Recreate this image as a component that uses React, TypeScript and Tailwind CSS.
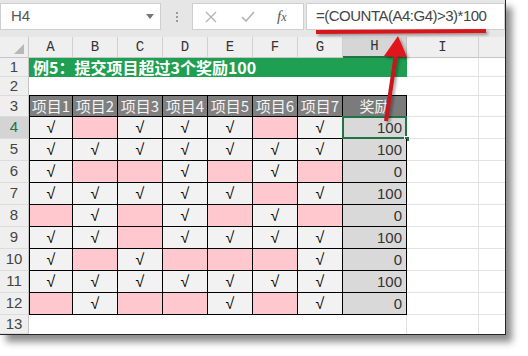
import React from "react";

const colW = ["w-[44px]", "w-[45px]", "w-[45px]", "w-[45px]", "w-[45px]", "w-[45px]", "w-[45px]"];
const letters = ["A", "B", "C", "D", "E", "F", "G"];

const data: [number, string, number][] = [
  [4, "1011101", 100],
  [5, "1111111", 100],
  [6, "1001010", 0],
  [7, "1111101", 100],
  [8, "0101010", 0],
  [9, "1101111", 100],
  [10, "1010001", 0],
  [11, "1111111", 100],
  [12, "0100101", 0],
];

const cjk = { fontFamily: '"Noto Sans CJK SC", "Noto Sans", sans-serif' };
const sans = { fontFamily: '"Liberation Sans", Arial, sans-serif' };
const mono = { fontFamily: '"Liberation Mono", "Courier New", monospace' };

function RowHead({ n, sel }: { n: number; sel?: boolean }) {
  return (
    <div
      className={`w-[29px] shrink-0 h-full flex items-center justify-center border-r border-b border-r-[#c6c6c6] border-b-[#dcdcdc] text-[15px] ${
        sel ? "bg-[#d4d4d4] text-[#217346]" : "bg-[#efefef] text-[#444]"
      }`}
      style={sans}
    >
      {n}
    </div>
  );
}

function Tail() {
  return (
    <>
      <div className="w-[72px] shrink-0 h-full border-r border-b border-[#e2e2e2]" />
      <div className="flex-1 h-full border-b border-[#e2e2e2]" />
    </>
  );
}

export default function App() {
  return (
    <div className="w-[528px] h-[356px] bg-white relative overflow-hidden">
      <div className="w-[506px] h-[335px] bg-white border-r border-b border-[#262626] shadow-[6px_7px_7px_rgba(0,0,0,0.45)] flex flex-col">
        {/* Formula bar */}
        <div className="h-[37px] shrink-0 bg-[#e6e6e6] flex items-start pt-[3px]">
          <div className="w-[161px] h-[27px] bg-white border border-[#cfcfcf] flex items-center justify-between pl-[10px] pr-[6px]">
            <span className="text-[15px] text-[#555]" style={sans}>H4</span>
            <svg width="8" height="5" viewBox="0 0 8 5">
              <polygon points="0,0 8,0 4,5" fill="#777" />
            </svg>
          </div>
          <div className="w-[31px] h-[27px] flex flex-col items-center justify-center gap-[2px]">
            <div className="w-[2px] h-[2px] bg-[#9a9a9a]" />
            <div className="w-[2px] h-[2px] bg-[#9a9a9a]" />
            <div className="w-[2px] h-[2px] bg-[#9a9a9a]" />
          </div>
          <div className="w-[112px] h-[27px] bg-white border border-[#cfcfcf] flex items-center">
            <svg width="12" height="12" viewBox="0 0 12 12" className="ml-[12px]">
              <path d="M1 1 L11 11 M11 1 L1 11" stroke="#b4b4b4" strokeWidth="1.4" />
            </svg>
            <svg width="14" height="12" viewBox="0 0 14 12" className="ml-[24px]">
              <path d="M1 6 L5 10 L13 1" stroke="#b4b4b4" strokeWidth="1.6" fill="none" />
            </svg>
            <span className="ml-[22px] text-[15px] italic text-[#555]" style={{ fontFamily: '"Liberation Serif", serif' }}>
              f<span className="text-[12px]">x</span>
            </span>
          </div>
          <div className="w-[2px]" />
          <div className="flex-1 h-[27px] bg-white border border-[#cfcfcf] flex items-center pl-[9px]">
            <span className="text-[15px] tracking-[-0.5px] text-[#444]" style={sans}>
              =(COUNTA(A4:G4)&gt;3)*100
            </span>
          </div>
        </div>

        {/* Column header row */}
        <div className="h-[21px] shrink-0 flex bg-[#efefef] text-[14px] text-[#333]" style={mono}>
          <div className="w-[29px] shrink-0 h-full border-r border-b border-[#c6c6c6] relative">
            <svg width="10" height="10" viewBox="0 0 10 10" className="absolute right-[4px] bottom-[3px]">
              <polygon points="10,0 10,10 0,10" fill="#b8b8b8" />
            </svg>
          </div>
          {letters.map((l, i) => (
            <div key={l} className={`${colW[i]} shrink-0 h-full flex items-center justify-center border-r border-b border-r-[#d0d0d0] border-b-[#c6c6c6]`}>
              {l}
            </div>
          ))}
          <div className="w-[64px] shrink-0 h-full flex items-center justify-center bg-[#d6d6d6] border-r border-[#c0c0c0] border-b-2 border-b-[#217346]">
            H
          </div>
          <div className="w-[72px] shrink-0 h-full flex items-center justify-center border-r border-b border-r-[#d0d0d0] border-b-[#c6c6c6]">
            I
          </div>
          <div className="flex-1 h-full border-b border-[#c6c6c6]" />
        </div>

        {/* Row 1 */}
        <div className="h-[19px] shrink-0 flex">
          <RowHead n={1} />
          <div className="w-[378px] shrink-0 h-full bg-[#1f9f51] border-r border-b border-[#1f9f51] flex items-center pl-[4px] overflow-visible">
            <span className="text-[16px] leading-none font-bold text-white whitespace-nowrap" style={cjk}>
              例5：提交项目超过3个奖励100
            </span>
          </div>
          <Tail />
        </div>

        {/* Row 2 */}
        <div className="h-[19px] shrink-0 flex">
          <RowHead n={2} />
          <div className="w-[378px] shrink-0 h-full border-b border-black" />
          <Tail />
        </div>

        {/* Row 3 header */}
        <div className="h-[21px] shrink-0 flex">
          <RowHead n={3} />
          {letters.map((l, i) => (
            <div
              key={l}
              className={`${colW[i]} shrink-0 h-full bg-[#7f7f7f] border-r border-b border-black ${i === 0 ? "border-l" : ""} flex items-center justify-center text-[15px] text-[#f4f4f4] whitespace-nowrap`}
              style={cjk}
            >
              项目{i + 1}
            </div>
          ))}
          <div className="w-[64px] shrink-0 h-full bg-[#7b7b7b] border-r border-b border-black flex items-center justify-center text-[15px] text-[#f4f4f4]" style={cjk}>
            奖励
          </div>
          <Tail />
        </div>

        {/* Data rows */}
        {data.map(([n, marks, val]) => (
          <div key={n} className="h-[22px] shrink-0 flex">
            <RowHead n={n} sel={n === 4} />
            {marks.split("").map((m, i) => (
              <div
                key={i}
                className={`${colW[i]} shrink-0 h-full border-r border-b border-black ${i === 0 ? "border-l" : ""} ${
                  m === "1" ? "bg-[#f2f2f2]" : "bg-[#ffc7ce]"
                } flex items-center justify-center text-[16px] text-black`}
                style={sans}
              >
                {m === "1" ? "√" : ""}
              </div>
            ))}
            <div
              className="w-[64px] shrink-0 h-full bg-[#d9d9d9] border-r border-b border-black flex items-center justify-end pr-[4px] pt-[2px] text-[15px] text-[#333] relative"
              style={sans}
            >
              {val}
              {n === 4 && (
                <>
                  <div className="absolute left-[-1px] top-[-1px] right-[-1px] bottom-[-1px] border-2 border-[#217346]" />
                  <div className="absolute right-[-4px] bottom-[-4px] w-[6px] h-[6px] bg-[#217346] border border-white" />
                </>
              )}
            </div>
            <Tail />
          </div>
        ))}

        {/* Row 13 */}
        <div className="h-[19px] shrink-0 flex">
          <RowHead n={13} />
          <div className="w-[378px] shrink-0 h-full border-r border-[#e2e2e2]" />
          <div className="w-[72px] shrink-0 h-full border-r border-[#e2e2e2]" />
          <div className="flex-1 h-full" />
        </div>
      </div>

      {/* Red annotation */}
      <svg className="absolute left-0 top-0 pointer-events-none" width="528" height="356" viewBox="0 0 528 356">
        <defs>
          <filter id="sh" x="-20%" y="-50%" width="140%" height="200%">
            <feDropShadow dx="2" dy="2" stdDeviation="1.5" floodColor="#000" floodOpacity="0.35" />
          </filter>
        </defs>
        <g filter="url(#sh)">
          <line x1="316" y1="32" x2="486" y2="31" stroke="#d7141e" strokeWidth="4" />
          <line x1="386" y1="121" x2="396" y2="54" stroke="#c8121c" strokeWidth="4" />
          <polygon points="398,36 384,56 407,57" fill="#e0151f" />
        </g>
      </svg>
    </div>
  );
}
